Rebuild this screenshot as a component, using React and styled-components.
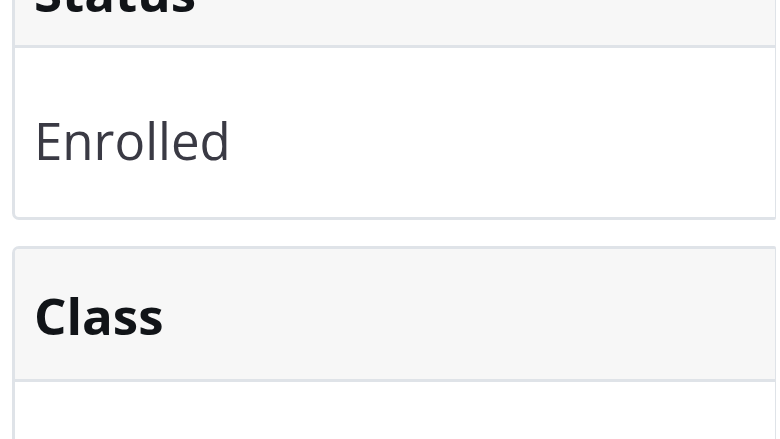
import React from "react";
import styled, { createGlobalStyle } from "styled-components";

const GlobalStyle = createGlobalStyle`
  html, body {
    margin: 0;
    padding: 0;
    background: #ffffff;
    overflow: hidden;
  }
  body {
    font-family: "Open Sans", "Liberation Sans", sans-serif;
  }
`;

const Page = styled.div`
  width: 780px;
  height: 439px;
  overflow: hidden;
  padding: 0 4px 0 12px;
  box-sizing: border-box;
`;

const Stack = styled.div`
  display: flex;
  flex-direction: column;
  gap: 26px;
  margin-top: -77px;
`;

const Panel = styled.section`
  border: 3px solid #dfe3e8;
  border-right-width: 1px;
  border-radius: 7px 2px 2px 7px;
  background: #ffffff;
  overflow: hidden;
`;

const PanelHeader = styled.div`
  background: #f7f7f7;
  border-bottom: 3px solid #dfe3e8;
  padding: 29px 19px ${(p) => p.$padBottom || 27}px;
  font-size: 51px;
  line-height: 74px;
  font-weight: 700;
  color: #111418;
`;

const PanelBody = styled.div`
  padding: 55px 19px 40px;
  font-size: 51px;
  line-height: 74px;
  color: #3a3a44;
`;

export default function App() {
  return (
    <>
      <GlobalStyle />
      <Page>
        <Stack>
          <Panel>
            <PanelHeader $padBottom={16}>Status</PanelHeader>
            <PanelBody>Enrolled</PanelBody>
          </Panel>
          <Panel>
            <PanelHeader>Class</PanelHeader>
            <PanelBody />
          </Panel>
        </Stack>
      </Page>
    </>
  );
}
